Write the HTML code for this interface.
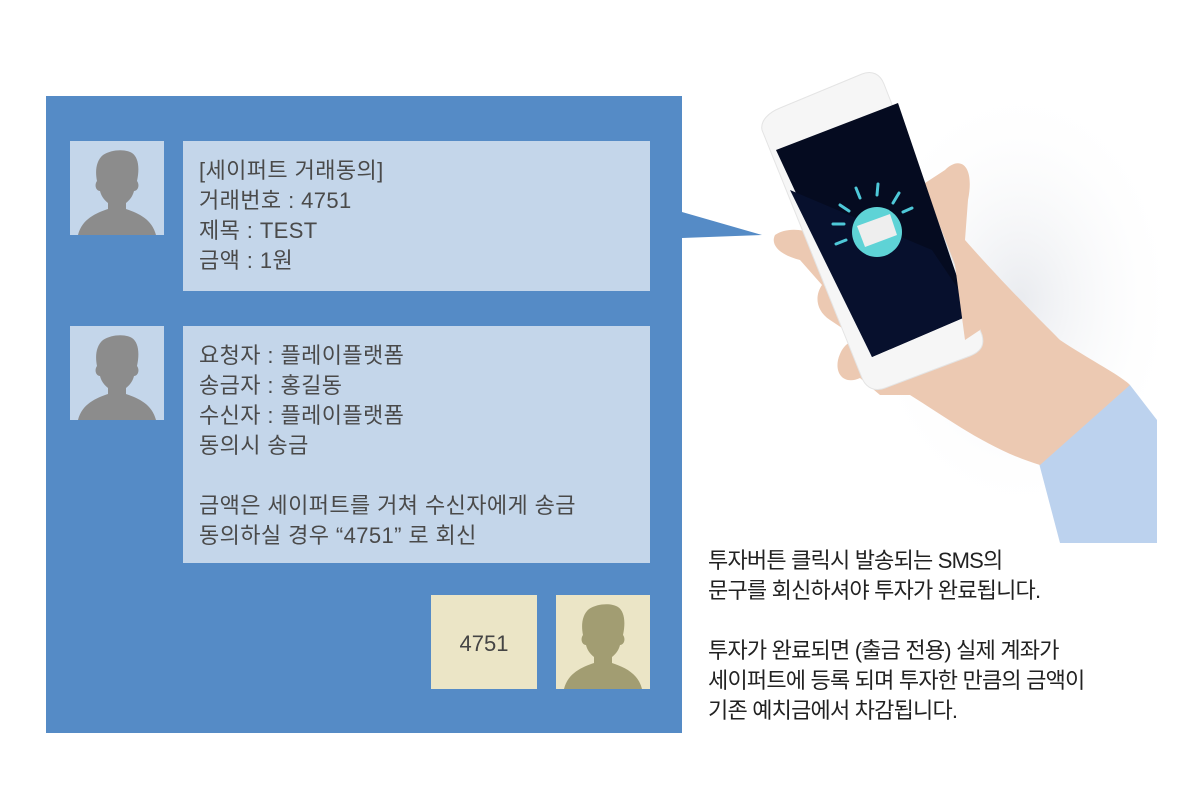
<!DOCTYPE html>
<html><head><meta charset="utf-8"><style>
body{margin:0;width:1200px;height:793px;background:#fff;position:relative;overflow:hidden;font-family:"Liberation Sans","Noto Sans CJK KR","NanumGothic",sans-serif}
.a{position:absolute}
.panel{left:46px;top:96px;width:636px;height:637px;background:#558bc6}
.bub{background:#c4d6ea;color:#4a4a4a;font-size:22px;line-height:30px;padding:15px 16px;box-sizing:border-box;letter-spacing:0.4px}
.desc{left:708px;top:546px;font-size:22px;line-height:30px;color:#222;letter-spacing:-0.8px}
</style></head><body>
<div class="a panel"></div>
<svg class="a" style="left:0;top:0" width="1200" height="793">
<defs>
<radialGradient id="sh" cx="0.5" cy="0.5" r="0.5"><stop offset="0" stop-color="#e9ebef"/><stop offset="1" stop-color="#fff" stop-opacity="0"/></radialGradient>
<path id="p" d="M8,94 C12,78 26,72 38,68 L38,62 C33,58 31,54 30,50 C26,50 24,44 27,40 C25,30 26,20 33,14 C42,8 56,8 62,12 C68,16 70,26 67,40 C70,44 68,50 64,50 C63,54 61,58 56,62 L56,68 C68,72 82,78 86,94 Z"/>
</defs>
<polygon points="682,212 762,235 682,238" fill="#558bc6"/>
<ellipse cx="1020" cy="300" rx="160" ry="220" fill="url(#sh)"/>
<polygon points="1025,410 1130,385 1157,420 1157,543 1060,543" fill="#bcd2ee"/>
<path d="M945,170 C960,155 975,165 968,200 L965,240 C1000,280 1040,320 1060,340 C1090,360 1120,375 1130,385 L1040,465 C990,450 950,420 910,395 L880,395 L860,378 C845,385 835,375 838,360 C842,345 850,340 860,340 L830,320 C815,310 815,295 822,285 L800,260 C780,255 770,245 775,235 C790,225 815,230 830,245 Z" fill="#ecc9b2"/>
<path d="M762,130 C760,120 770,112 780,108 L862,74 C872,70 880,74 884,84 L982,335 C985,346 980,352 970,356 L885,388 C875,392 866,388 862,378 Z" fill="#f6f6f6" stroke="#e4e4e4"/>
<polygon points="776,150 898,103 970,315 872,357" fill="#050b20"/>
<polygon points="790,190 932,250 963,296 970,315 872,357" fill="#07102d"/>
<path d="M955,265 C975,270 985,300 980,330 L965,340 Z" fill="#ecc9b2"/>
<circle cx="877" cy="232" r="25" fill="#5ed3d6"/>
<polygon points="857,226 890,214 897,235 865,247" fill="#eee"/>
<g stroke="#4ec8d8" stroke-width="3" stroke-linecap="round">
<line x1="856" y1="188" x2="860" y2="198"/><line x1="878" y1="184" x2="877" y2="195"/><line x1="899" y1="193" x2="893" y2="203"/>
<line x1="840" y1="205" x2="849" y2="211"/><line x1="833" y1="224" x2="844" y2="224"/><line x1="836" y1="244" x2="846" y2="240"/><line x1="903" y1="212" x2="912" y2="208"/>
</g>
<rect x="70" y="141" width="94" height="94" fill="#c4d6ea"/><use href="#p" x="70" y="141" fill="#8c8c8c"/>
<rect x="70" y="326" width="94" height="94" fill="#c4d6ea"/><use href="#p" x="70" y="326" fill="#8c8c8c"/>
<rect x="556" y="595" width="94" height="94" fill="#ebe5c6"/><use href="#p" x="556" y="595" fill="#a29d72"/>
<rect x="431" y="595" width="106" height="94" fill="#ebe5c6"/>
<text x="484" y="651" text-anchor="middle" font-size="22" fill="#444" font-family="Liberation Sans, sans-serif">4751</text>
</svg>
<div class="a bub" style="left:183px;top:141px;width:467px;height:150px">[세이퍼트 거래동의]<br>거래번호 : 4751<br>제목 : TEST<br>금액 : 1원</div>
<div class="a bub" style="left:183px;top:326px;width:467px;height:237px">요청자 : 플레이플랫폼<br>송금자 : 홍길동<br>수신자 : 플레이플랫폼<br>동의시 송금<br><br>금액은 세이퍼트를 거쳐 수신자에게 송금<br>동의하실 경우 “4751” 로 회신</div>
<div class="a desc">투자버튼 클릭시 발송되는 SMS의<br>문구를 회신하셔야 투자가 완료됩니다.<br><br>투자가 완료되면 (출금 전용) 실제 계좌가<br>세이퍼트에 등록 되며 투자한 만큼의 금액이<br>기존 예치금에서 차감됩니다.</div>
</body></html>
